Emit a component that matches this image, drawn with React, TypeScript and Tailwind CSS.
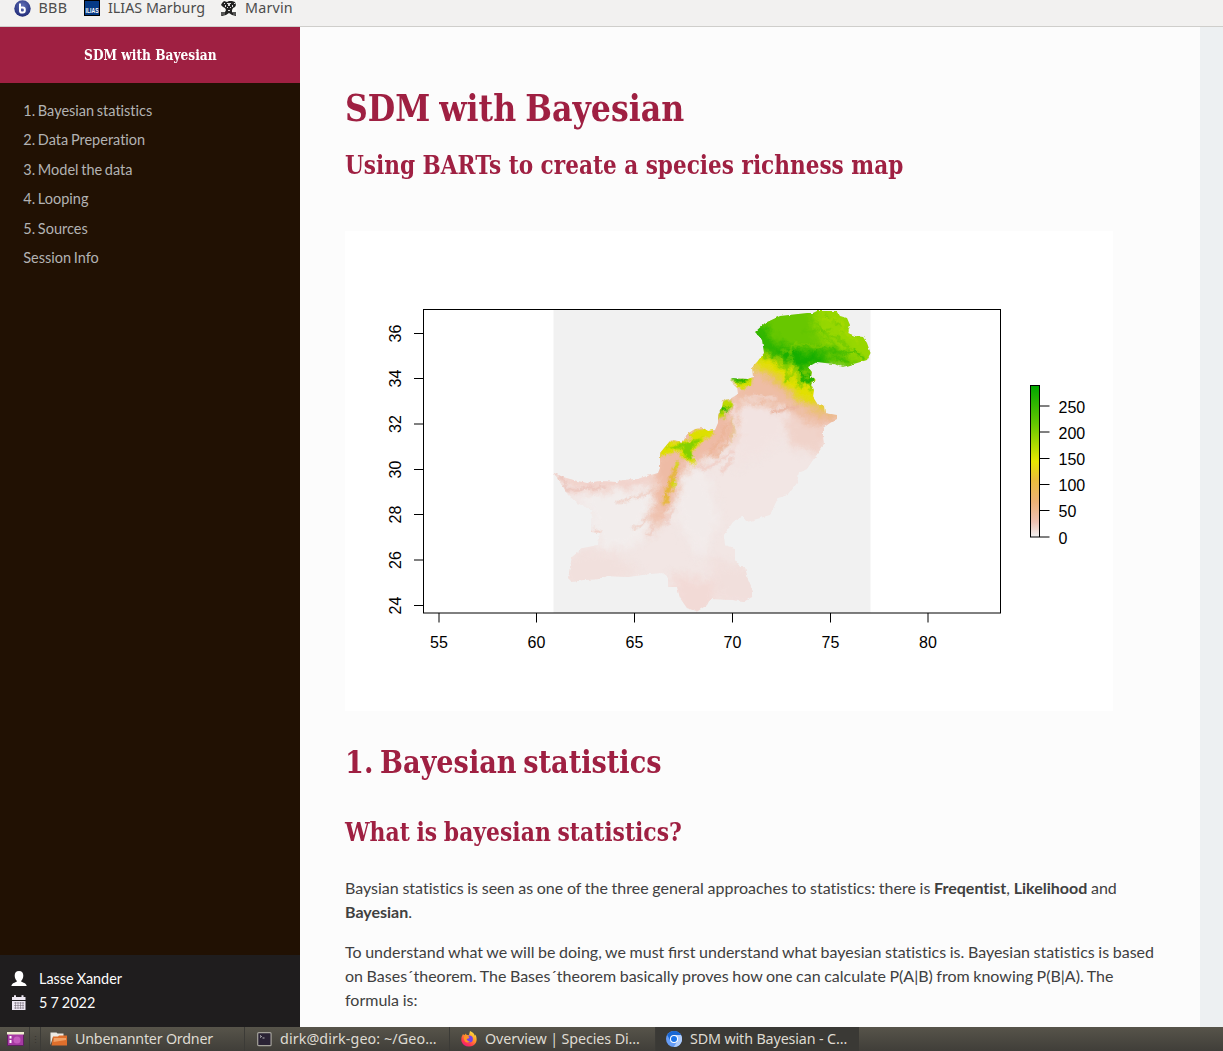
import React from "react";

const slab = "[font-family:'DejaVu_Serif_Condensed','DejaVu_Serif',serif] font-bold";
const ui = "[font-family:'Noto_Sans','Open_Sans',sans-serif]";

const outline =
  "M553.5 472.7 563 477 577 481 587 483 600 481 617 482 623 480 637 479 647 476 658 473 660 468 660 453 665 447 670 441 673 440 683 442 687 434 695 429 703 428 708 431 715 430 718 423 718 415 722 407 723 400 730 399 738 394 737 387 730 381 731 378 748 379 753 377 752 367 757 362 764 353 762 340 755 332 765 323 780 316 807 313 813 313 817 311 837 311 840 316 847 318 850 325 848 333 855 336 863 337 867 343 870.5 353 867 360 857 363 843 367 833 364 817 362 808 367 812 372 811 377 816 380 811 384 814 390 813 397 818 405 824 406 825 413 837 415 837 419 830 423 823 428 823 437 824 444 818 453 811 463 807 469 799 473 797 483 788 495 778 498 770 515 757 519 747 522 742 516 733 522 724 535 725 545 735 548 735 560 740 567 745 567 748 580 753 592 752 597 743 602 733 600 710 599 707 605 697 611.5 687 608 680 598 677 587 668 587 668 577 663 573 650 574 628 577 607 576 600 579 583 580 572 582 568 578 572 557 583 548 598 545 600 533 591 532 592 510 577 503 568 495 563 487Z";

const xTicks = [
  [55, 439], [60, 536.5], [65, 634.5], [70, 732.5], [75, 830.5], [80, 928],
];
const yTicks = [
  [36, 333.5], [34, 378.5], [32, 424], [30, 469.5], [28, 514.5], [26, 560], [24, 605.5],
];
const legendTicks = [
  [250, 406], [200, 432], [150, 458.5], [100, 484.5], [50, 510.5], [0, 537],
];

function RichnessMap() {
  return (
    <svg className="block" width="768" height="480" viewBox="345 231 768 480" fontFamily="Liberation Sans, sans-serif" fontSize="16">
      <defs>
        <clipPath id="land"><path d={outline} /></clipPath>
        <linearGradient id="scale" x1="0" y1="0" x2="0" y2="1">
          <stop offset="0" stopColor="#00a600" />
          <stop offset=".25" stopColor="#63c600" />
          <stop offset=".5" stopColor="#e6e600" />
          <stop offset=".62" stopColor="#e9bd3a" />
          <stop offset=".77" stopColor="#ecb176" />
          <stop offset=".9" stopColor="#efc2b3" />
          <stop offset="1" stopColor="#f2f2f2" />
        </linearGradient>
        <filter id="coast" x="-5%" y="-5%" width="110%" height="110%">
          <feTurbulence type="fractalNoise" baseFrequency=".25" numOctaves="2" seed="4" />
          <feDisplacementMap in="SourceGraphic" scale="3" xChannelSelector="R" yChannelSelector="G" />
        </filter>
        <filter id="soft" filterUnits="userSpaceOnUse" x="530" y="290" width="360" height="340" colorInterpolationFilters="sRGB">
          <feGaussianBlur stdDeviation="4" result="b" />
          <feTurbulence type="fractalNoise" baseFrequency=".09" numOctaves="4" seed="8" />
          <feDisplacementMap in="b" scale="13" xChannelSelector="R" yChannelSelector="G" />
        </filter>
        <filter id="fine" filterUnits="userSpaceOnUse" x="530" y="290" width="360" height="340" colorInterpolationFilters="sRGB">
          <feGaussianBlur stdDeviation=".8" result="b" />
          <feTurbulence type="fractalNoise" baseFrequency=".14" numOctaves="3" seed="3" />
          <feDisplacementMap in="b" scale="8" xChannelSelector="R" yChannelSelector="G" />
        </filter>
      </defs>
      <rect x="345" y="231" width="768" height="480" fill="#fff" />
      <rect x="553.5" y="310" width="317" height="303" fill="#f1f1f1" />
      <g filter="url(#coast)">
        <g clipPath="url(#land)">
          <rect x="540" y="300" width="340" height="320" fill="#f2e6e4" />
          <g filter="url(#soft)">
            <path d="M575 495 640 482 652 500 640 545 600 550 590 515Z" fill="#f2edec" />
            <path d="M682 465 705 470 720 520 700 560 676 520Z" fill="#f2ebea" />
            <path d="M738 390 790 400 780 440 735 470Z" fill="#f2e3e1" />
            <path d="M565 555 600 548 640 570 600 590 560 590Z" fill="#f1e0dd" />
            <path d="M670 575 720 580 710 620 680 620Z" fill="#f2dad6" />
            <path d="M710 560 760 570 760 605 720 605Z" fill="#f1dfdc" />
            <path d="M785 412 850 405 835 435 815 455 790 445Z" fill="#f0d3ca" />
            <path d="M545 465 575 478 655 474 650 486 600 490 570 490Z" fill="#f1d0c8" />
            <path d="M655 435 735 395 735 438 705 462 688 462 668 513 648 535 655 500Z" fill="#eebba5" />
            <path d="M745 355 780 370 830 405 850 418 820 428 785 408 750 402 725 402 738 385Z" fill="#eebda5" />
            <path d="M768 350 790 360 830 400 845 418 815 413 780 388 760 370Z" fill="#ebb87c" />
            <path d="M752 358 772 346 825 355 824 410 800 401 775 375 755 368Z" fill="#e2e000" />
            <path d="M738 290 880 290 880 375 822 366 806 380 790 367 768 353 750 355Z" fill="#68c700" />
            <path d="M762 344 790 348 835 355 820 364 806 370 785 361 764 353Z" fill="#12ad00" />
            <path d="M747 327 763 324 773 338 770 350 760 348Z" fill="#2cb500" />
            <path d="M810 296 850 298 880 345 870 375 852 356 818 338Z" fill="#97d700" />
          </g>
          <g filter="url(#fine)">
            <path d="M657 455 666 441 690 440 690 432 710 426 714 434 701 443 691 453 696 465 682 458 679 451 665 455Z" fill="#dddf00" />
            <path d="M665 447 686 443 702 438 690 451 693 460 686 458 682 449Z" fill="#84d000" />
            <path d="M681 461 673 480 669 500 663 506 665 490 674 467Z" fill="#e6b73c" />
            <path d="M678 463 676 468M675 478 672 487" fill="none" stroke="#cfdd00" strokeWidth="3" />
            <path d="M717 420 722 402 730 399 732 406 725 416Z" fill="#bfda00" />
            <path d="M719 413 722 406 729 407 728 412Z" fill="#31b500" />
            <path d="M728 377 753 377 752 385 742 389 733 382Z" fill="#d5df00" />
            <path d="M728 376 750 379 746 383 733 381Z" fill="#27b300" />
            <path d="M776 357 782 369 788 363 786 381 796 369 800 387 804 373 812 391" fill="none" stroke="#80ce00" strokeWidth="2" />
            <path d="M799 365 805 381 813 382 808 373" fill="none" stroke="#22b000" strokeWidth="4" />
            <path d="M780 352 790 350 796 344 818 347 824 341 M790 350 792 366" fill="none" stroke="#8ed000" strokeWidth="1.500" />
            <path d="M817 325 827 335 841 340 850 351 M824 337 835 345 843 359 M825 315 838 324 845 333 M802 330 820 331 833 330" fill="none" stroke="#5ec400" strokeWidth="1.500" />
            <path d="M828 348 844 354 855 351 864 359 M835 356 848 362" fill="none" stroke="#35b800" strokeWidth="2" />
            <path d="M821 318 837 320 844 330 858 342 M843 320 841 333" fill="none" stroke="#aadb00" strokeWidth="2" />
            <path d="M733 418 734 442" fill="none" stroke="#deb35b" strokeWidth="1.500" />
            <path d="M725 423 721 440 706 456 M731 423 726 444 714 458" fill="none" stroke="#eaae8c" strokeWidth="2" opacity=".7" />
            <path d="M732 450 720 461 705 469 695 465 M733 459 720 473" fill="none" stroke="#f0cec6" strokeWidth="3" />
            <path d="M734 405 736 438 732 455" fill="none" stroke="#f2dcd8" strokeWidth="3" />
            <path d="M745 398 762 402 M752 396 776 399" fill="none" stroke="#f0d3c9" strokeWidth="3" />
            <path d="M771 412 788 408 797 408" fill="none" stroke="#e9b39f" strokeWidth="3" />
            <path d="M617 503 637 497 654 490 M633 529 648 518 M648 537 654 523 M665 524 675 507" fill="none" stroke="#eec8bd" strokeWidth="2" />
            <path d="M553 472 563 480 569 490 605 487" fill="none" stroke="#ebc3ba" strokeWidth="2.500" />
            <path d="M590 532 601 532" fill="none" stroke="#f0c8bd" strokeWidth="2.500" />
          </g>
        </g>
      </g>
      <rect x="423.5" y="309.5" width="577" height="303.5" fill="none" stroke="#000" />
      <g stroke="#000">
        {xTicks.map(([v, x]) => <path key={v} d={`M${x} 613v9.5`} />)}
        {yTicks.map(([v, y]) => <path key={v} d={`M414 ${y}h9.5`} />)}
        {legendTicks.map(([v, y]) => <path key={v} d={`M1040 ${y}h9.5`} />)}
      </g>
      <rect x="1030.5" y="385.5" width="9" height="151.5" fill="url(#scale)" stroke="#000" />
      <g fill="#000">
        {xTicks.map(([v, x]) => <text key={v} x={x} y="648" textAnchor="middle">{v}</text>)}
        {yTicks.map(([v, y]) => <text key={v} transform={`translate(401 ${y}) rotate(-90)`} textAnchor="middle">{v}</text>)}
        {legendTicks.map(([v, y]) => <text key={v} x="1058.5" y={y + 6.5}>{v}</text>)}
      </g>
    </svg>
  );
}

const BbbIcon = () => (
  <svg className="-my-px" width="17" height="17" viewBox="0 0 17 17">
    <defs><radialGradient id="bbb" cx=".5" cy=".35" r=".7"><stop stopColor="#6272b8" /><stop offset="1" stopColor="#1b2573" /></radialGradient></defs>
    <circle cx="8.500" cy="8.500" r="8.200" fill="url(#bbb)" />
    <path d="M6 3.500v7.200q0 1.800 1.800 1.800h1q2 0 2-2v-1q0-2-2-2H6" fill="none" stroke="#fff" strokeWidth="2" />
  </svg>
);
const IliasIcon = () => (
  <svg width="16" height="16" viewBox="0 0 16 16">
    <rect x=".5" y=".5" width="15" height="15" fill="#053a86" stroke="#000" />
    <text x="1.600" y="13.200" textLength="13" lengthAdjust="spacingAndGlyphs" fontFamily="Liberation Sans" fontWeight="bold" fontSize="7" fill="#fff">ILIAS</text>
  </svg>
);
const MarvinIcon = () => (
  <svg width="16" height="16" viewBox="0 0 16 16">
    <rect width="16" height="16" fill="#f8f8f6" />
    <path d="M1 3 3 1l3 1 2-1 3 0 3 1 1 3-1 2-2 1-1 2 0 2 4 2v2l-4-1-3-2-3 2-4 1-2-1 1-1 4-2 1-2-1-2-2-1-2-2Z" fill="#222" />
    <path d="M6 3h4v1H9v2H7V4H6ZM4 5h1v2H4Zm7 0h1v2h-1ZM6 7h1v1H6Zm3 0h1v1H9ZM7 10h2v1H7ZM3 3h1v1H3Zm10 0h1v1h-1Z" fill="#ddd" />
    <path d="M0 12h4v3H0Zm12 0h3v3h-3Z" fill="#555" />
  </svg>
);
const UserIcon = () => (
  <svg width="16" height="16" viewBox="0 0 16 16">
    <path d="M8 0c3 0 4.300 1.800 4.300 4.500 0 2.300-.8 4.200-2 5.200v1c1.500.9 5 1.200 5.400 4.300H.4c.4-3.100 3.800-3.400 5.300-4.300v-1c-1.200-1-2-2.900-2-5.200C3.700 1.800 5 0 8 0Z" fill="#fff" />
  </svg>
);
const CalendarIcon = () => (
  <svg width="16" height="16" viewBox="0 0 16 16">
    <path d="M1 2h13.500v3H1Zm2-1.800h2V3H3Zm7.500 0h2V3h-2ZM1 6h13.500v9H1Z" fill="#eee8f3" />
    <path d="M3 8h10M3 10.500h10M3 13h10M4.500 7v7M7 7v7M9.500 7v7M12 7v7" stroke="#665f68" strokeWidth=".5" />
  </svg>
);
const FilesIcon = () => (
  <svg width="17" height="16" viewBox="0 0 17 16">
    <rect x=".5" y="2" width="16" height="12.500" fill="#a63aa3" stroke="#5e2160" />
    <rect y="1" width="17" height="2.500" fill="#eeeed0" />
    <circle cx="10" cy="9" r="3.500" fill="#c65dc0" />
    <path d="M3.500 5v2.500M3.500 9v3" stroke="#fff" strokeWidth="2" />
  </svg>
);
const FolderIcon = () => (
  <svg width="17" height="16" viewBox="0 0 17 16">
    <path d="M.5 14V1.500h6l1 1h6V6H3Z" fill="#eceae4" />
    <path d="M3 5.500h5l1-1h8v10H1.500Z" fill="#df6f2c" />
    <path d="M4 7h12v2L3.500 11Z" fill="#f0a066" />
  </svg>
);
const TerminalIcon = () => (
  <svg width="15" height="15" viewBox="0 0 15 15">
    <rect x=".7" y=".7" width="13.400" height="13" rx="1" fill="#2a2335" stroke="#a5a39b" strokeWidth="1.200" />
    <path d="m3 3.500 1.500 1L3 5.500M5.500 6h2" fill="none" stroke="#ddd" strokeWidth=".8" />
  </svg>
);
const FirefoxIcon = () => (
  <svg width="16" height="16" viewBox="0 0 16 16">
    <defs><linearGradient id="fox" x1=".9" y1="0" x2=".3" y2="1"><stop stopColor="#fff04a" /><stop offset=".45" stopColor="#ff9a26" /><stop offset=".8" stopColor="#ff3850" /><stop offset="1" stopColor="#ee1b76" /></linearGradient></defs>
    <path d="M2 3q.5 1 1.500 1L5 2.500 5.500 4 8 4l1-4q4 1.500 5 5l.5-1.500Q16.500 8 15 11.500q-2 4-7 4-5.500 0-7.500-5Q-.3 6.500 2 3Z" fill="url(#fox)" />
    <circle cx="8.300" cy="8" r="3.600" fill="#7542e5" />
    <path d="M3 5.500q3-1.500 5.500.5l-1 1.500-2 .5q1 2.500 3.500 2.500-3 2-5 0T3 5.500Z" fill="#ff9426" />
  </svg>
);
const ChromiumIcon = () => (
  <svg width="16" height="16" viewBox="0 0 16 16">
    <circle cx="8" cy="8" r="8" fill="#669df6" />
    <path d="M8 4h7A8 8 0 0 0 1.200 3.900L4.600 10Z" fill="#1967d2" />
    <path d="M15 4.100A8 8 0 0 1 7.800 16l3.600-6L8 4Z" fill="#aecbfa" />
    <circle cx="8" cy="8" r="4" fill="#fff" /><circle cx="8" cy="8" r="3" fill="#1a73e8" />
  </svg>
);

function Bookmark({ icon, label, className }: { icon: React.ReactNode; label: string; className: string }) {
  return <div className={`flex h-4 shrink-0 items-center whitespace-nowrap ${className}`}>{icon}<span className="ml-2">{label}</span></div>;
}

function Task({ icon, label, className = "" }: { icon: React.ReactNode; label: string; className?: string }) {
  return (
    <div className={`flex shrink-0 items-center border-l border-[#3c3b37] whitespace-nowrap ${className}`}>
      {icon}<span className="ml-2">{label}</span>
    </div>
  );
}

export default function App() {
  const nav = ["1. Bayesian statistics", "2. Data Preperation", "3. Model the data", "4. Looping", "5. Sources", "Session Info"];
  return (
    <div className="flex h-[1051px] w-[1223px] flex-col overflow-hidden bg-[#fcfcfc] [font-family:Lato,sans-serif] text-[#404040] [font-variant-ligatures:none]">
      <header className={`flex h-[27px] shrink-0 items-start overflow-hidden border-b border-[#cfcecb] bg-[#f2f1f0] pl-[13.500px] text-[14.3px] leading-4 text-[#4c4c4c] ${ui}`}>
        <Bookmark className="w-[70.500px] tracking-[.3px]" icon={<BbbIcon />} label="BBB" />
        <Bookmark className="w-[137px]" icon={<IliasIcon />} label="ILIAS Marburg" />
        <Bookmark className="tracking-[.2px]" icon={<MarvinIcon />} label="Marvin" />
      </header>
      <div className="flex min-h-0 flex-1">
        <aside className="flex w-[300px] shrink-0 flex-col bg-[#211103]">
          <div className={`flex h-14 items-center justify-center bg-[#9f2042] text-[14px] whitespace-nowrap text-white ${slab}`}>
            <span className="inline-block scale-x-[.97]">SDM with Bayesian</span>
          </div>
          <nav className="flex flex-1 flex-col pt-[12.500px] pl-[23.300px] text-[14.5px] leading-[29.600px] text-[#b3b3b3] [word-spacing:-1px]">
            {nav.map((n) => <a key={n}>{n}</a>)}
          </nav>
          <div className="flex h-[72px] flex-col bg-[#1f1d1e] pt-3 pl-[11px] text-[14.4px] leading-6 text-[#fcfcfc] [word-spacing:-.6px]">
            <div className="flex items-center gap-3"><UserIcon /><span>Lasse Xander</span></div>
            <div className="flex items-center gap-3"><CalendarIcon /><span>5 7 2022</span></div>
          </div>
        </aside>
        <main className="h-[1000px] w-[900px] shrink-0 overflow-hidden pt-[60px] pr-11 pl-[45px] text-base leading-6 [word-spacing:-.5px]">
          <h1 className={`h-11 text-[36.500px] leading-[43px] whitespace-nowrap text-[#9f2042] [word-spacing:-2px] ${slab}`}><span className="inline-block origin-left scale-x-[.963]">SDM with Bayesian</span></h1>
          <h2 className={`mt-3 h-11 text-[25.500px] leading-[44px] whitespace-nowrap text-[#9f2042] [word-spacing:0px] ${slab}`}><span className="inline-block origin-left scale-x-[.942]">Using BARTs to create a species richness map</span></h2>
          <div className="mt-11"><RichnessMap /></div>
          <h2 className={`mt-[29px] h-11 text-[31.500px] leading-[44px] whitespace-nowrap text-[#9f2042] [word-spacing:-3px] ${slab}`}><span className="inline-block origin-left scale-x-[.959]">1. Bayesian statistics</span></h2>
          <h3 className={`mt-[26px] h-11 text-[25.500px] leading-[44px] whitespace-nowrap text-[#9f2042] [word-spacing:-1px] ${slab}`}><span className="inline-block origin-left scale-x-[.955]">What is bayesian statistics?</span></h3>
          <p className="mt-[22px] whitespace-nowrap [word-spacing:-.4px]">Baysian statistics is seen as one of the three general approaches to statistics: there is <b>Freqentist</b>, <b>Likelihood</b> and <br /><b>Bayesian</b>.</p>
          <p className="mt-4 whitespace-nowrap">To understand what we will be doing, we must <span className="[font-variant-ligatures:normal]">first</span> understand what bayesian statistics is. Bayesian statistics is based<br />on Bases´theorem. The Bases´theorem basically proves how one can calculate P(A|B) from knowing P(B|A). The<br />formula is:</p>
        </main>
        <div className="flex-1 bg-[#edf0f2]" />
      </div>
      <footer className={`flex h-6 shrink-0 bg-linear-to-b from-[#57544a] to-[#403e39] text-[14.3px] text-[#dfdbd2] ${ui}`}>
        <div className="flex w-[30px] items-center border-r border-[#3c3b37] pl-[7px]"><FilesIcon /></div>
        <div className="flex w-[10px] items-center justify-center text-[9px] leading-none text-[#35342f]">⋮</div>
        <Task className="w-[204px] pl-[9px] tracking-[-.22px]" icon={<FolderIcon />} label="Unbenannter Ordner" />
        <Task className="w-[205px] pl-3 tracking-[.1px]" icon={<TerminalIcon />} label="dirk@dirk-geo: ~/Geo…" />
        <Task className="w-[206px] pl-[11px] tracking-[-.1px]" icon={<FirefoxIcon />} label="Overview | Species Di…" />
        <Task className="w-[204px] bg-[#3a3935] pl-[10px] tracking-[-.13px]" icon={<ChromiumIcon />} label="SDM with Bayesian - C…" />
      </footer>
    </div>
  );
}
